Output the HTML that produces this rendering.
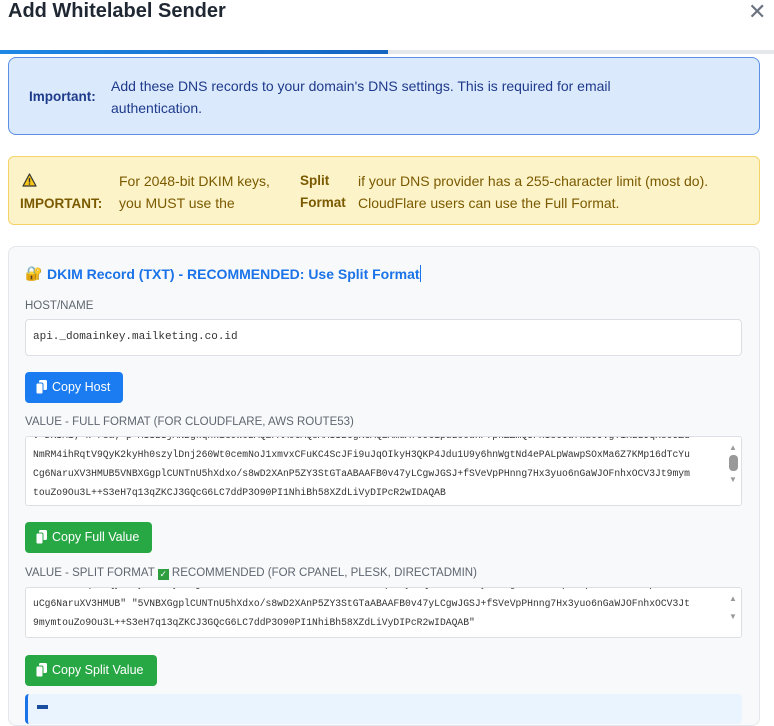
<!DOCTYPE html>
<html><head><meta charset="utf-8"><style>
*{box-sizing:border-box;margin:0;padding:0}
body{width:774px;height:707px;overflow:hidden;background:#fff;font-family:"Liberation Sans",sans-serif;position:relative;color:#333}
.a{position:absolute}
.lbl{position:absolute;left:25px;font-size:11.5px;color:#5f6670;letter-spacing:0}
.mono{font-family:"Liberation Mono",monospace;font-size:9.7px;color:#333;white-space:pre;position:absolute;left:33px}
.btn{position:absolute;left:25px;height:31px;border-radius:4px;color:#fff;font-size:12.5px;line-height:31px;padding-left:27px}
.btn svg{position:absolute;left:11px;top:8px}
.ta{position:absolute;left:25px;width:717px;background:#fff;border:1px solid #dcdfe3;border-radius:3px;overflow:hidden}
.sb{position:absolute;right:0;top:0;width:16px;bottom:0;background:#fff}
</style></head><body>
<div class="a" style="left:8px;top:0;font-size:20px;font-weight:bold;color:#1f2733">Add Whitelabel Sender</div>
<div class="a" style="left:748px;top:-1px;font-size:22px;color:#6b7280">✕</div>
<div class="a" style="left:0;top:50px;width:774px;height:4px;background:#e5e7eb"></div>
<div class="a" style="left:0;top:50px;width:388px;height:4px;background:linear-gradient(90deg,#1e88e5,#1565c0)"></div>

<div class="a" style="left:8px;top:57px;width:752px;height:78px;background:#dbe9fd;border:1px solid #5b8ee6;border-radius:8px"></div>
<div class="a" style="left:29px;top:89px;font-size:13.5px;font-weight:bold;color:#1e3a8a">Important:</div>
<div class="a" style="left:111px;top:75px;font-size:14px;line-height:22px;color:#1e3a8a">Add these DNS records to your domain's DNS settings. This is required for email<br>authentication.</div>

<div class="a" style="left:8px;top:156px;width:752px;height:69px;background:#fdf3c8;border:1px solid #f5d36a;border-radius:6px"></div>
<svg class="a" style="left:22px;top:173px" width="15" height="14" viewBox="0 0 15 14"><path d="M7.5 1 L14 13 H1 Z" fill="#f5c518" stroke="#333" stroke-width="1.2" stroke-linejoin="round"/><rect x="6.8" y="5" width="1.4" height="4.5" fill="#333"/><rect x="6.8" y="10.3" width="1.4" height="1.4" fill="#333"/></svg>
<div class="a" style="left:20px;top:193px;font-size:13.5px;line-height:22px;color:#7a5a00;font-weight:bold">IMPORTANT:</div>
<div class="a" style="left:119px;top:170px;font-size:14px;line-height:22px;color:#7a5a00">For 2048-bit DKIM keys,<br>you MUST use the</div>
<div class="a" style="left:300px;top:170px;font-size:13.5px;line-height:22px;color:#7a5a00;font-weight:bold">Split<br>Format</div>
<div class="a" style="left:358px;top:170px;font-size:14px;line-height:22px;color:#7a5a00">if your DNS provider has a 255-character limit (most do).<br>CloudFlare users can use the Full Format.</div>

<div class="a" style="left:8px;top:246px;width:752px;height:480px;background:#f8f9fa;border:1px solid #e3e6ea;border-radius:8px"></div>
<div class="a" style="left:25px;top:265px;font-size:14px">🔐</div>
<div class="a" style="left:47px;top:265px;font-size:14px;font-weight:bold;color:#1a73e8">DKIM Record (TXT) - RECOMMENDED: Use Split Format<span style="display:inline-block;width:1px;height:17px;background:#1a73e8;vertical-align:-3px"></span></div>

<div class="lbl" style="top:300px">HOST/NAME</div>
<div class="a" style="left:25px;top:319px;width:717px;height:37px;background:#fff;border:1px solid #dcdfe3;border-radius:4px"></div>
<div class="mono" style="top:331px;font-size:11px">api._domainkey.mailketing.co.id</div>
<div class="btn" style="top:372px;width:98px;background:#1a7cf0"><svg width="11" height="14" viewBox="0 0 11 14"><rect x="3" y="0" width="8" height="10" rx="1.5" fill="#fff"/><rect x="0" y="3" width="7" height="11" rx="1.5" fill="#fff" stroke="#1a7cf0" stroke-width="1"/></svg>Copy Host</div>

<div class="lbl" style="top:416px">VALUE - FULL FORMAT (FOR CLOUDFLARE, AWS ROUTE53)</div>
<div class="ta" style="top:436px;height:70px">
<div class="mono" style="left:7px;top:-11px;line-height:19px">v=DKIM1; k=rsa; p=MIIBIjANBgkqhkiG9w0BAQEFAAOCAQ8AMIIBCgKCAQEAmuA7c9C1pdLcOuh/fphZZmQ3FnI8OJu7Wu0JVgT1KLLJqK8OJZd
NmRM4ihRqtV9QyK2kyHh0szylDnj260Wt0cemNoJ1xmvxCFuKC4ScJFi9uJqOIkyH3QKP4Jdu1U9y6hnWgtNd4ePALpWawpSOxMa6Z7KMp16dTcYu
Cg6NaruXV3HMUB5VNBXGgplCUNTnU5hXdxo/s8wD2XAnP5ZY3StGTaABAAFB0v47yLCgwJGSJ+fSVeVpPHnng7Hx3yuo6nGaWJOFnhxOCV3Jt9mym
touZo9Ou3L++S3eH7q13qZKCJ3GQcG6LC7ddP3O90PI1NhiBh58XZdLiVyDIPcR2wIDAQAB</div>
<div class="sb"><div class="a" style="left:4px;top:6px;font-size:8px;color:#999">▲</div><div class="a" style="left:4px;top:18px;width:9px;height:16px;border-radius:4px;background:#999"></div><div class="a" style="left:4px;top:38px;font-size:8px;color:#999">▼</div></div>
</div>
<div class="btn" style="top:522px;width:127px;background:#28a745"><svg width="11" height="14" viewBox="0 0 11 14"><rect x="3" y="0" width="8" height="10" rx="1.5" fill="#fff"/><rect x="0" y="3" width="7" height="11" rx="1.5" fill="#fff" stroke="#28a745" stroke-width="1"/></svg>Copy Full Value</div>

<div class="lbl" style="top:567px">VALUE - SPLIT FORMAT <span style="display:inline-block;width:11px;height:11px;background:#2e9e3e;color:#fff;font-size:9px;line-height:11px;text-align:center;vertical-align:-1px">✓</span> RECOMMENDED (FOR CPANEL, PLESK, DIRECTADMIN)</div>
<div class="ta" style="top:587px;height:51px">
<div class="mono" style="left:7px;top:-13px;line-height:19px">8NmRM4ihRqtV9QyK2kyHh0szylDnj260Wt0cemNoJ1xmvxCFuKC4ScJFi9uJqOIkyH3QKP4Jdu1U9y6hnWgtNd4ePALpWawpSOxMa6Z7KMp16dTcY
uCg6NaruXV3HMUB" "5VNBXGgplCUNTnU5hXdxo/s8wD2XAnP5ZY3StGTaABAAFB0v47yLCgwJGSJ+fSVeVpPHnng7Hx3yuo6nGaWJOFnhxOCV3Jt
9mymtouZo9Ou3L++S3eH7q13qZKCJ3GQcG6LC7ddP3O90PI1NhiBh58XZdLiVyDIPcR2wIDAQAB"</div>
<div class="sb"><div class="a" style="left:4px;top:6px;font-size:8px;color:#999">▲</div><div class="a" style="left:4px;top:24px;font-size:8px;color:#999">▼</div></div>
</div>
<div class="btn" style="top:655px;width:132px;background:#28a745"><svg width="11" height="14" viewBox="0 0 11 14"><rect x="3" y="0" width="8" height="10" rx="1.5" fill="#fff"/><rect x="0" y="3" width="7" height="11" rx="1.5" fill="#fff" stroke="#28a745" stroke-width="1"/></svg>Copy Split Value</div>

<div class="a" style="left:25px;top:694px;width:717px;height:30px;background:#eaf4fe;border-left:3px solid #1a73e8;border-radius:4px"></div>
<div class="a" style="left:37px;top:705px;width:11px;height:4px;background:#1a4fa0"></div>
</body></html>
